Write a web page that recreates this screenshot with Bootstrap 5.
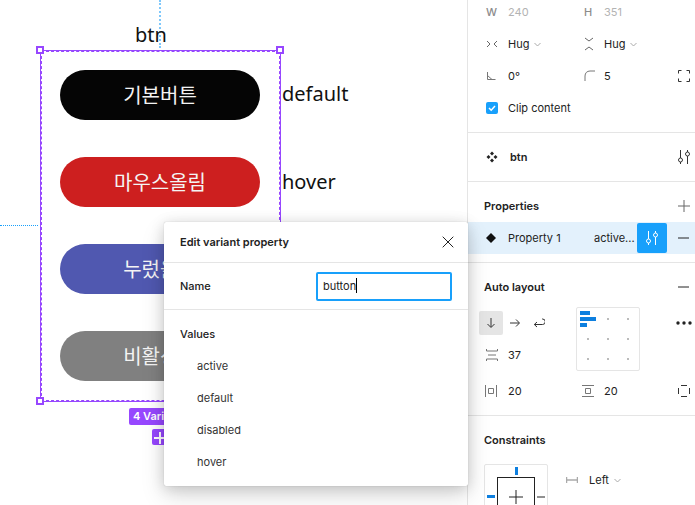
<!DOCTYPE html>
<html lang="en">
  <head>
    <meta charset="UTF-8" />
    <meta name="viewport" content="width=device-width, initial-scale=1.0" />
    <title>Edit variant property</title>
    <link rel="stylesheet" href="https://cdn.jsdelivr.net/npm/bootstrap@5.3.0/dist/css/bootstrap.min.css" />
    <style>
      body { width: 695px; height: 505px; overflow: hidden; background: #fff; font-family: Inter, "Liberation Sans", sans-serif; font-size: 11px; color: #222; }
      .stage { width: 468px; height: 505px; position: relative; z-index: 2; flex: none; border-right: 1px solid #e5e5e5; }
      .guide-v { position: absolute; left: 159px; top: 0; height: 48px; border-left: 2px dotted #7fc8fb; }
      .guide-h { position: absolute; left: 0; top: 225px; width: 38px; border-top: 1px dotted #18a0fb; }
      .frame { position: absolute; left: 40px; top: 50px; width: 241px; height: 352px; border: 1px solid #9747ff; outline: 1px dashed #9747ff; outline-offset: -2px; padding: 19px; display: flex; flex-direction: column; gap: 37px; }
      .pill { width: 200px; height: 50px; flex: none; border-radius: 25px; color: #f4f4f4; font-family: "Noto Sans CJK KR", sans-serif; font-size: 20px; display: flex; align-items: center; justify-content: center; }
      .pill-black { background: #050505; }
      .pill-red { background: #cd1f1f; }
      .pill-blue { background: #5058b0; }
      .pill-grey { background: #808080; }
      .handle { position: absolute; width: 8px; height: 8px; background: #fff; border: 2px solid #9747ff; }
      .canvas-label { position: absolute; font-family: "Noto Sans", sans-serif; font-size: 20px; line-height: 30px; color: #111; }
      .variant-tag { position: absolute; left: 129px; top: 408px; width: 62px; height: 17px; border-radius: 2px; background: #9747ff; color: #fff; font-weight: 600; line-height: 17px; padding-left: 4px; white-space: nowrap; }
      .variant-add { position: absolute; left: 152px; top: 429px; width: 16px; height: 16px; border-radius: 2px; background: #9747ff; }
      .dialog { position: absolute; left: 164px; top: 222px; width: 304px; height: 264px; background: #fff; border-radius: 2px; box-shadow: 0 2px 14px rgba(0,0,0,.15), 0 0 1px rgba(0,0,0,.3), 0 10px 24px rgba(0,0,0,.14); }
      .dialog-head { height: 41px; padding: 0 14px 0 16px; border-bottom: 1px solid #e5e5e5; font-weight: 600; }
      .dialog-name { height: 47px; padding: 0 16px; border-bottom: 1px solid #e5e5e5; font-weight: 500; }
      .name-box { width: 136px; height: 29px; border: 2px solid #18a0fb; border-radius: 2px; padding: 0 5px; font-weight: 400; line-height: 25px; }
      .caret-bar { display: inline-block; width: 1px; height: 15px; background: #000; vertical-align: -3px; }
      .dialog-values { padding: 16px 16px 0; }
      .dialog-values .val-title { height: 16px; line-height: 16px; font-weight: 500; margin-bottom: 8px; }
      .dialog-values .val-item { height: 32px; line-height: 32px; padding-left: 17px; color: #333; }
      .side { width: 227px; flex: none; }
      .sec { border-bottom: 1px solid #e5e5e5; }
      .sec-size { margin-top: -4px; height: 137px; padding-left: 18px; }
      .size-row { height: 32px; display: grid; grid-template-columns: 22px 76px 20px 74px 12px; align-items: center; }
      .dim { color: #b3b3b3; }
      .dim-l { color: #8c8c8c; font-weight: 500; }
      .chev { margin-left: 5px; }
      .tick { width: 12px; height: 12px; background: #18a0fb; border-radius: 2px; display: inline-block; margin-right: 10px; line-height: 0; }
      .sec-comp { height: 49px; padding: 0 4px 0 18px; font-weight: 600; }
      .sec-props { height: 81px; padding-top: 8px; }
      .sec-head { height: 32px; padding: 0 5px 0 16px; font-weight: 600; }
      .prop-row { height: 32px; background: #e3f1fc; padding-left: 18px; }
      .prop-name { width: 86px; margin-left: 12px; }
      .prop-val { width: 43px; white-space: nowrap; }
      .prop-tune { width: 30px; height: 30px; background: #18a0fb; border-radius: 2px; }
      .sec-auto { height: 153px; padding-top: 8px; }
      .auto-body { padding: 4px 0 0 11px; height: 76px; }
      .flow-col { width: 97px; padding-top: 4px; }
      .flow-btn { width: 24px; height: 24px; }
      .flow-on { background: #e5e5e5; border-radius: 2px; }
      .gap-row { height: 24px; margin-top: 8px; padding-left: 7px; }
      .gap-row span { margin-left: 10px; }
      .align-box { width: 64px; height: 64px; border: 1px solid #e5e5e5; border-radius: 2px; }
      .more-btn { margin-left: 36px; margin-top: 14px; }
      .pad-row { padding-left: 17px; height: 24px; display: grid; grid-template-columns: 23px 74px 22px 74px 12px; align-items: center; }
      .sec-cons { padding-top: 8px; }
      .cons-body { padding: 8px 0 0 16px; }
      .cons-box { width: 64px; height: 64px; border: 1px solid #e5e5e5; border-radius: 2px 2px 0 0; flex: none; }
      .cons-side { margin: 8px 0 0 18px; }
      .cons-icon { margin-right: 11px; }
    </style>
  </head>
  <body class="d-flex">
    <div class="stage">
      <div class="guide-v"></div>
      <div class="guide-h"></div>
      <div class="canvas-label" style="left: 135px; top: 20px">btn</div>
      <div class="canvas-label" style="left: 282px; top: 79px">default</div>
      <div class="canvas-label" style="left: 282px; top: 167px">hover</div>
      <div class="frame">
        <div class="pill pill-black">기본버튼</div>
        <div class="pill pill-red">마우스올림</div>
        <div class="pill pill-blue">누렀을때</div>
        <div class="pill pill-grey">비활성화</div>
      </div>
      <div class="handle" style="left: 36px; top: 46px"></div>
      <div class="handle" style="left: 276px; top: 46px"></div>
      <div class="handle" style="left: 36px; top: 397px"></div>
      <div class="variant-tag">4 Variants</div>
      <div class="variant-add">
        <svg width="16" height="16" viewBox="0 0 16 16"><path d="M8 2v12M2 8h12" stroke="#fff" stroke-width="2" /></svg>
      </div>

      <div class="dialog">
        <div class="dialog-head d-flex align-items-center justify-content-between">
          <span>Edit variant property</span>
          <svg width="12" height="12" viewBox="0 0 12 12"><path d="M.7.7l10.6 10.6M11.3.7L.7 11.3" stroke="#222" fill="none" /></svg>
        </div>
        <div class="dialog-name d-flex align-items-center justify-content-between">
          <span>Name</span>
          <div class="name-box">button<span class="caret-bar"></span></div>
        </div>
        <div class="dialog-values">
          <div class="val-title">Values</div>
          <div class="val-item">active</div>
          <div class="val-item">default</div>
          <div class="val-item">disabled</div>
          <div class="val-item">hover</div>
        </div>
      </div>
    </div>

    <div class="side">
      <div class="sec sec-size">
        <div class="size-row">
          <span class="dim-l">W</span><span class="dim">240</span><span class="dim-l">H</span><span class="dim">351</span><span></span>
        </div>
        <div class="size-row">
          <svg width="12" height="8" viewBox="0 0 12 8"><path d="M1 1l3 3-3 3M11 1L8 4l3 3" stroke="#666" fill="none" /></svg>
          <span class="d-flex align-items-center">Hug<svg class="chev" width="7" height="5" viewBox="0 0 7 5"><path d="M.5 1l3 3 3-3" stroke="#aaa" fill="none" /></svg></span>
          <svg width="10" height="14" viewBox="0 0 10 14"><path d="M1 1l4 3 4-3M1 13l4-3 4 3" stroke="#666" fill="none" /></svg>
          <span class="d-flex align-items-center">Hug<svg class="chev" width="7" height="5" viewBox="0 0 7 5"><path d="M.5 1l3 3 3-3" stroke="#aaa" fill="none" /></svg></span>
          <span></span>
        </div>
        <div class="size-row">
          <svg width="10" height="10" viewBox="0 0 10 10"><path d="M1.500 1v7.500H9.500M1.500 4.500L6 8.500" stroke="#777" fill="none" /></svg>
          <span>0°</span>
          <svg width="12" height="12" viewBox="0 0 12 12"><path d="M1 11V6C1 3 3 1 6 1h5" stroke="#777" fill="none" /></svg>
          <span>5</span>
          <svg width="12" height="12" viewBox="0 0 12 12"><path d="M.5 3.500V.5h3M8.500.5h3v3M11.500 8.500v3h-3M3.500 11.500h-3v-3" stroke="#333" fill="none" /></svg>
        </div>
        <div class="d-flex align-items-center" style="height: 32px">
          <span class="tick"><svg width="12" height="12" viewBox="0 0 12 12"><path d="M3 6l2.200 2.200L9 4" stroke="#fff" stroke-width="1.500" fill="none" /></svg></span>
          <span>Clip content</span>
        </div>
      </div>

      <div class="sec sec-comp d-flex align-items-center justify-content-between">
        <span class="d-flex align-items-center gap-2">
          <svg width="12" height="12" viewBox="0 0 12 12" fill="#222"><path d="M6 .5L8 2.500 6 4.500 4 2.500zM2.500 4L4.500 6 2.500 8 .5 6zM9.500 4L11.500 6 9.500 8 7.500 6zM6 7.500L8 9.500 6 11.500 4 9.500z" /></svg>
          <span class="ms-1">btn</span>
        </span>
        <svg width="14" height="16" viewBox="0 0 14 16"><g stroke="#333" fill="none"><path d="M3.500 1v8M3.500 13v2M10.500 1v2M10.500 7v8" /><circle cx="3.500" cy="11" r="2" /><circle cx="10.500" cy="5" r="2" /></g></svg>
      </div>

      <div class="sec sec-props">
        <div class="sec-head d-flex align-items-center justify-content-between">
          <span>Properties</span>
          <svg width="12" height="12" viewBox="0 0 12 12"><path d="M6 0v12M0 6h12" stroke="#666" /></svg>
        </div>
        <div class="prop-row d-flex align-items-center">
          <svg width="10" height="10" viewBox="0 0 10 10" fill="#111"><path d="M5 0l5 5-5 5-5-5z" /></svg>
          <span class="prop-name">Property 1</span>
          <span class="prop-val">active...</span>
          <span class="prop-tune d-flex align-items-center justify-content-center">
            <svg width="14" height="16" viewBox="0 0 14 16"><g stroke="#fff" fill="none"><path d="M3.500 1v8M3.500 13v2M10.500 1v2M10.500 7v8" /><circle cx="3.500" cy="11" r="2" /><circle cx="10.500" cy="5" r="2" /></g></svg>
          </span>
          <svg width="11" height="2" viewBox="0 0 11 2" style="margin-left: 11px"><path d="M0 1h11" stroke="#222" /></svg>
        </div>
      </div>

      <div class="sec sec-auto">
        <div class="sec-head d-flex align-items-center justify-content-between">
          <span>Auto layout</span>
          <svg width="11" height="2" viewBox="0 0 11 2" style="margin-right: 1px"><path d="M0 1h11" stroke="#222" /></svg>
        </div>
        <div class="auto-body d-flex">
          <div class="flow-col">
            <div class="d-flex">
              <span class="flow-btn flow-on d-flex align-items-center justify-content-center"><svg width="10" height="12" viewBox="0 0 10 12"><path d="M5 1v9M1.500 7L5 10.500 8.500 7" stroke="#333" fill="none" /></svg></span>
              <span class="flow-btn d-flex align-items-center justify-content-center"><svg width="12" height="10" viewBox="0 0 12 10"><path d="M1 5h9M7 1.500L10.500 5 7 8.500" stroke="#333" fill="none" /></svg></span>
              <span class="flow-btn d-flex align-items-center justify-content-center"><svg width="12" height="10" viewBox="0 0 12 10"><path d="M9 1h.5a2 2 0 0 1 0 5.500H1.500M4 4L1.300 6.500 4 9" stroke="#333" fill="none" /></svg></span>
            </div>
            <div class="gap-row d-flex align-items-center">
              <svg width="12" height="12" viewBox="0 0 12 12"><path d="M.5 0v2h11V0M2 6h8M.5 12v-2h11v2" stroke="#777" fill="none" /></svg>
              <span>37</span>
            </div>
          </div>
          <div class="align-box">
            <svg width="62" height="62" viewBox="0 0 62 62">
              <g fill="#0d7fdf"><rect x="3" y="3" width="10" height="4" /><rect x="3" y="9" width="16" height="4" /><rect x="3" y="15" width="7" height="4" /></g>
              <g fill="#bbb"><rect x="30" y="10" width="2" height="2" /><rect x="50" y="10" width="2" height="2" /><rect x="10" y="30" width="2" height="2" /><rect x="30" y="30" width="2" height="2" /><rect x="50" y="30" width="2" height="2" /><rect x="10" y="50" width="2" height="2" /><rect x="30" y="50" width="2" height="2" /><rect x="50" y="50" width="2" height="2" /></g>
            </svg>
          </div>
          <svg class="more-btn" width="16" height="4" viewBox="0 0 16 4" fill="#222"><circle cx="2" cy="2" r="1.700" /><circle cx="8" cy="2" r="1.700" /><circle cx="14" cy="2" r="1.700" /></svg>
        </div>
        <div class="pad-row">
          <svg width="12" height="12" viewBox="0 0 12 12"><path d="M.5 0v12M11.500 0v12M3.500 3.500h5v5h-5z" stroke="#777" fill="none" /></svg>
          <span>20</span>
          <svg width="12" height="12" viewBox="0 0 12 12"><path d="M0 .5h12M0 11.500h12M3.500 3.500h5v5h-5z" stroke="#777" fill="none" /></svg>
          <span>20</span>
          <svg width="12" height="12" viewBox="0 0 12 12"><path d="M3 .5h6M3 11.500h6M.5 3v6M11.500 3v6" stroke="#333" fill="none" /></svg>
        </div>
      </div>

      <div class="sec-cons">
        <div class="sec-head d-flex align-items-center"><span>Constraints</span></div>
        <div class="cons-body d-flex">
          <div class="cons-box">
            <svg width="62" height="62" viewBox="0 0 62 62">
              <rect x="12.500" y="12.500" width="37" height="60" fill="none" stroke="#222" />
              <path d="M31 25v14M24 32h14M52 32h8" stroke="#222" fill="none" />
              <rect x="30" y="2" width="3" height="8" fill="#0d7fdf" />
              <rect x="2" y="30" width="8" height="3" fill="#0d7fdf" />
            </svg>
          </div>
          <div class="cons-side d-flex align-items-center" style="height: 16px">
            <svg class="cons-icon" width="12" height="6" viewBox="0 0 12 6"><path d="M.5 0v6M11.500 0v6M1 3h10" stroke="#aaa" stroke-width="1.500" fill="none" /></svg>
            <span>Left</span>
            <svg class="chev" width="7" height="5" viewBox="0 0 7 5"><path d="M.5 1l3 3 3-3" stroke="#aaa" fill="none" /></svg>
          </div>
        </div>
      </div>
    </div>
    <script src="https://cdn.jsdelivr.net/npm/bootstrap@5.3.0/dist/js/bootstrap.bundle.min.js"></script>
  </body>
</html>
